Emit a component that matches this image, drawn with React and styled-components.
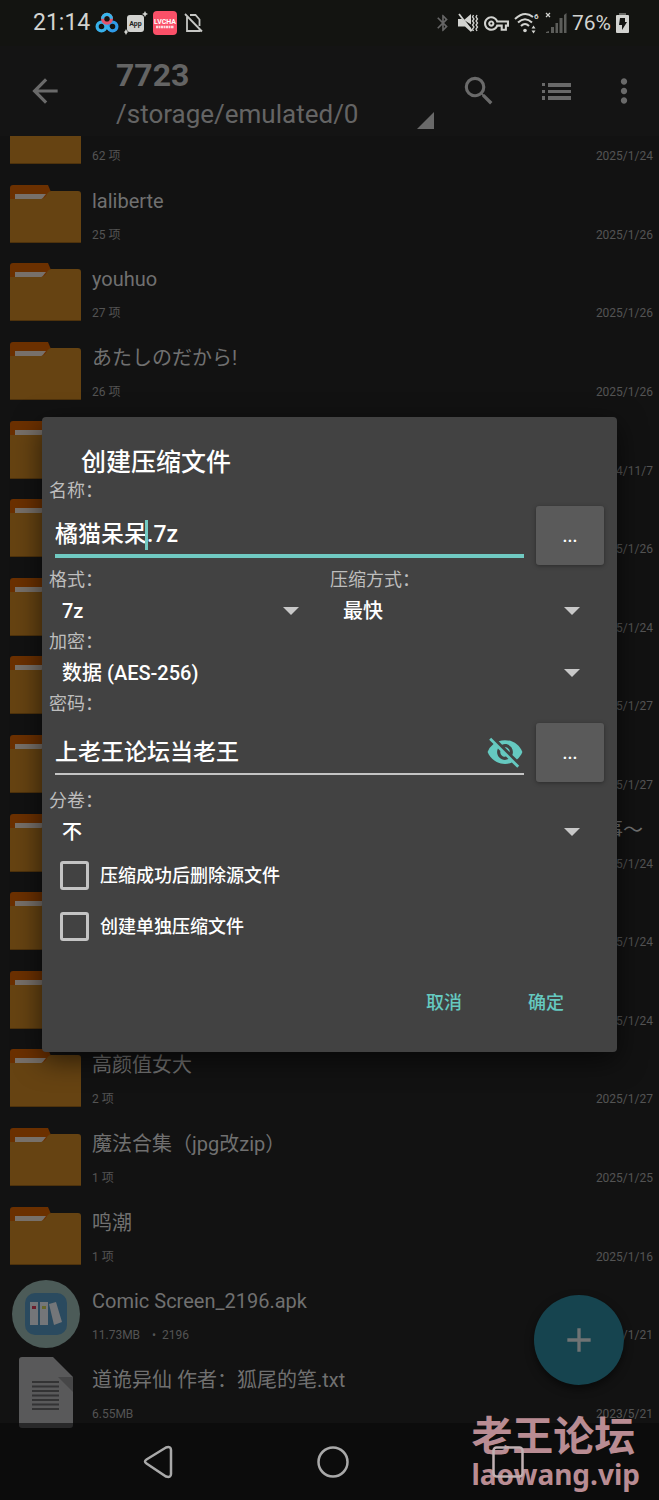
import React, { useState } from 'react';
import styled, { createGlobalStyle } from 'styled-components';
import {
  MdAdd,
  MdArrowBack,
  MdBluetooth,
  MdMoreVert,
  MdOutlineVpnKey,
  MdSearch,
  MdVisibilityOff,
} from 'react-icons/md';

const GlobalStyle = createGlobalStyle`
  * {
    box-sizing: border-box;
  }

  body {
    margin: 0;
    background: #121212;
  }

  body, button, input, select {
    font-family: Roboto, "Noto Sans CJK SC", sans-serif;
  }

  svg {
    display: block;
    flex: none;
  }
`;

// Screen

const Screen = styled.div`
  position: relative;
  display: flex;
  flex-direction: column;
  height: 100vh;
  overflow: hidden;
  background: #121212;
  color: #6e6e6e;
`;

const StatusBar = styled.header`
  display: flex;
  flex: none;
  align-items: center;
  justify-content: space-between;
  height: 46px;
  padding: 0 30px 0 33px;
  background: #131411;
  color: #d2d3d0;
`;

const StatusGroup = styled.div`
  display: flex;
  align-items: center;
  gap: 5px;
`;

const StatusText = styled.span`
  font-size: ${({ $size }) => $size}px;
  line-height: 28px;
`;

const Toolbar = styled.div`
  display: flex;
  flex: none;
  align-items: center;
  height: 90px;
  padding: 0 18px 0 28px;
  background: #141414;
`;

const IconButton = styled.button`
  display: flex;
  align-items: center;
  justify-content: center;
  width: ${({ $width }) => $width || 34}px;
  height: 48px;
  padding: 0;
  border: 0;
  background: none;
  color: ${({ $color }) => $color || '#6a6a6a'};
`;

const PathBox = styled.div`
  display: flex;
  flex: 1;
  align-items: flex-end;
  justify-content: space-between;
  max-width: 318px;
  margin-left: 54px;
  padding-top: 6px;
`;

const PathArrow = styled.svg`
  margin-bottom: 4px;
`;

const FolderTitle = styled.h1`
  margin: 0;
  font-size: 32px;
  font-weight: 700;
  line-height: 40px;
  color: #646464;
`;

const FolderPath = styled.div`
  font-size: 26px;
  line-height: 38px;
  color: #646464;
`;

const ToolbarActions = styled.div`
  display: flex;
  flex: none;
  align-items: center;
  gap: 28px;
  margin-left: auto;
`;

// File list

const ListViewport = styled.main`
  flex: 1;
  min-height: 0;
  overflow: hidden;
`;

const FileList = styled.ul`
  display: grid;
  grid-auto-rows: 1fr;
  height: calc(100% + 41px);
  margin: -40px 0 0;
  padding: 0;
  list-style: none;
`;

const FileRow = styled.li`
  display: flex;
  align-items: center;
  gap: 11px;
  min-height: 0;
  padding: 0 6px 0 10px;
`;

const FileIcon = styled.div`
  display: flex;
  flex: none;
  justify-content: center;
  width: 71px;
`;

const FileInfo = styled.div`
  display: flex;
  flex: 1;
  flex-direction: column;
  gap: 13px;
  min-width: 0;
  padding-top: 3px;
`;

const FileName = styled.div`
  height: 26px;
  padding-right: ${({ $end }) => ($end ? 10 : 0)}px;
  font-size: 20px;
  line-height: 26px;
  text-align: ${({ $end }) => ($end ? 'right' : 'left')};
  white-space: nowrap;
  color: #707070;
`;

const FileMeta = styled.div`
  display: flex;
  justify-content: space-between;
  height: 16px;
  font-size: 12px;
  line-height: 16px;
  white-space: pre;
  color: #545454;
`;

const Fab = styled.button`
  position: absolute;
  right: 35px;
  bottom: 115px;
  display: flex;
  align-items: center;
  justify-content: center;
  width: 90px;
  height: 90px;
  padding: 0;
  border: 0;
  border-radius: 50%;
  background: #16444f;
  box-shadow: 0 4px 8px rgba(0, 0, 0, 0.5);
  color: #6f7374;
`;

const NavBar = styled.nav`
  position: relative;
  display: flex;
  flex: none;
  align-items: center;
  justify-content: space-around;
  height: 77px;
  margin-top: -8px;
  padding: 0 64px 0 70px;
  background: rgba(9, 9, 9, 0.6);
`;

const NavButton = styled(IconButton)`
  position: relative;
  z-index: 2;
`;

const Watermark = styled.div`
  position: absolute;
  right: 19px;
  bottom: 8px;
  z-index: 1;
  font-family: "Noto Sans", "Noto Sans CJK SC", sans-serif;
  font-weight: 700;
  color: #b98c93;
`;

const WatermarkName = styled.div`
  font-size: 41px;
  line-height: 42px;
`;

const WatermarkSite = styled.div`
  font-size: 28px;
  line-height: 36px;
`;

// Dialog

const Overlay = styled.div`
  position: absolute;
  inset: 0;
  z-index: 3;
  display: flex;
  align-items: center;
  padding: 45px 42px 76px;
`;

const Dialog = styled.form`
  display: flex;
  flex: 1;
  flex-direction: column;
  padding: 31px 6px 24px 7px;
  border-radius: 4px;
  background: #424242;
  box-shadow: 0 8px 28px rgba(0, 0, 0, 0.6);
  color: #fff;
`;

const DialogTitle = styled.h2`
  margin: 0 0 0 32px;
  font-size: 25px;
  font-weight: 500;
  line-height: 30px;
`;

const Label = styled.label`
  display: block;
  font-size: 18px;
  line-height: 26px;
  color: #bdbdbd;
`;

const FieldRow = styled.div`
  display: flex;
  align-items: center;
  gap: 12px;
  padding: ${({ $space }) => $space}px 7px ${({ $space }) => $space}px 6px;
`;

const Field = styled.div`
  position: relative;
  display: flex;
  flex: 1;
  align-items: center;
  height: 44px;
  border-bottom: ${({ $active }) => ($active ? '4px solid #70cac2' : '2px solid #c4c4c4')};
`;

const TextInput = styled.input`
  flex: 1;
  min-width: 0;
  height: 40px;
  padding: 0 0 4px;
  border: 0;
  outline: 0;
  background: none;
  font-size: 23px;
  font-weight: 500;
  color: #fff;
`;

const Caret = styled.span`
  position: absolute;
  top: 6px;
  left: 90px;
  width: 3px;
  height: 30px;
  background: #70cac2;
`;

const BrowseButton = styled.button`
  width: 68px;
  height: 59px;
  padding: 0;
  border: 0;
  border-radius: 3px;
  background: #5a5a5a;
  box-shadow: 0 1px 4px rgba(0, 0, 0, 0.35);
  font-size: 18px;
  font-weight: 500;
  color: #fff;
`;

const Columns = styled.div`
  display: grid;
  grid-template-columns: 1fr 1fr;
`;

const SelectBox = styled.div`
  display: flex;
  align-items: center;
  height: 36px;
  padding-right: 31px;
`;

const Select = styled.select`
  flex: 1;
  height: 36px;
  margin-right: -16px;
  padding: 0 16px 0 13px;
  border: 0;
  outline: 0;
  appearance: none;
  background: none;
  font-size: 20px;
  font-weight: 500;
  color: #fff;
`;

const CheckRow = styled.label`
  display: flex;
  align-items: center;
  gap: 11px;
  height: 51px;
  padding-left: 11px;
  font-size: 18px;
  font-weight: 500;
`;

const CheckText = styled.span`
  padding-bottom: 3px;
`;

const CheckBox = styled.input`
  flex: none;
  width: 29px;
  height: 29px;
  margin: 0;
  border: 3px solid #c4c4c4;
  border-radius: 3px;
  appearance: none;

  &:checked {
    background: #70cac2;
  }
`;

const Actions = styled.div`
  display: flex;
  justify-content: flex-end;
  gap: 22px;
  padding: 24px 25px 0 0;
`;

const TextButton = styled.button`
  width: 80px;
  height: 52px;
  padding: 0 0 2px;
  border: 0;
  background: none;
  font-size: 18px;
  font-weight: 500;
  color: #65c9c0;
`;

const files = [
  { name: '', meta: '62 项', date: '2025/1/24' },
  { name: 'laliberte', meta: '25 项', date: '2025/1/26' },
  { name: 'youhuo', meta: '27 项', date: '2025/1/26' },
  { name: 'あたしのだから!', meta: '26 项', date: '2025/1/26' },
  { name: '', meta: '', date: '2024/11/7' },
  { name: '', meta: '', date: '2025/1/26' },
  { name: '', meta: '', date: '2025/1/24' },
  { name: '', meta: '', date: '2025/1/27' },
  { name: '', meta: '', date: '2025/1/27' },
  { name: '事～', meta: '', date: '2025/1/24', end: true },
  { name: '', meta: '', date: '2025/1/24' },
  { name: '', meta: '', date: '2025/1/24' },
  { name: '高颜值女大', meta: '2 项', date: '2025/1/27' },
  { name: '魔法合集（jpg改zip）', meta: '1 项', date: '2025/1/25' },
  { name: '鸣潮', meta: '1 项', date: '2025/1/16' },
  { name: 'Comic Screen_2196.apk', meta: '11.73MB    •  2196', date: '2025/1/21', type: 'apk' },
  { name: '道诡异仙 作者：狐尾的笔.txt', meta: '6.55MB', date: '2023/5/21', type: 'txt' },
];

function FolderIcon() {
  return (
    <svg width="71" height="58" viewBox="0 0 71 58">
      <path d="M0 3q0-3 3-3h35l3 7v12H0z" fill="#6b3000" />
      <path d="M5 9h31l-4 5H5z" fill="#77706a" />
      <path d="M0 14h31q3 0 5-3l1-2q2-3 4-3h27q3 0 3 3v49H0z" fill="#664312" />
      <path d="M0 57h71v1H0z" fill="#4e320c" />
    </svg>
  );
}

function ApkIcon() {
  return (
    <svg width="68" height="68" viewBox="0 0 68 68">
      <circle cx="34" cy="34" r="34" fill="#4c5b58" />
      <rect x="13" y="13" width="42" height="42" rx="10" fill="#2a4a5f" />
      <path d="M18 22h8v23h-8zM28 22h8v23h-8zM37 24l7-2 6 20-8 3z" fill="#747679" />
      <path d="M20 26h4v3h-4z" fill="#6b1d2b" />
      <path d="M30 26h4v3h-4z" fill="#67672a" />
    </svg>
  );
}

function TextFileIcon() {
  return (
    <svg width="54" height="71" viewBox="0 0 54 71">
      <path d="M3 0h31l20 20v48q0 3-3 3H3q-3 0-3-3V3q0-3 3-3z" fill="#59595a" />
      <path d="M39 20h15v15z" fill="#464647" />
      <path
        d="M13 25h27M13 29.500h27M13 34h27M13 38.500h27M13 43h27M13 47.500h27M13 52h27"
        stroke="#333334"
        strokeWidth="2"
      />
    </svg>
  );
}

const icons = { apk: ApkIcon, txt: TextFileIcon };

function DropArrow() {
  return (
    <svg width="16" height="8" viewBox="0 0 16 8">
      <path d="M0 0h16L8 8z" fill="#c8c8c8" />
    </svg>
  );
}

function Dropdown({ id, label, options }) {
  return (
    <div>
      <Label htmlFor={id}>{label}</Label>
      <SelectBox>
        <Select id={id}>
          {options.map((option) => (
            <option key={option}>{option}</option>
          ))}
        </Select>
        <DropArrow />
      </SelectBox>
    </div>
  );
}

function AppBadges() {
  return (
    <>
      <svg width="24" height="22" viewBox="0 0 24 22" fill="none" strokeWidth="3.200">
        <circle cx="6.500" cy="14.500" r="4.400" stroke="#38b1ea" />
        <circle cx="17.500" cy="14.500" r="4.400" stroke="#2f9be8" />
        <path d="M9.500 11.500l5 6" stroke="#38b1ea" />
        <circle cx="12" cy="6.800" r="4.400" stroke="#e2546c" />
        <path d="M7.600 6.800a4.400 4.400 0 0 1 8.800 0" stroke="#35b5ee" />
      </svg>
      <svg width="24" height="24" viewBox="0 0 24 24">
        <rect x="3" y="4" width="17" height="17" rx="3" fill="#d2d3d0" />
        <path d="M21 0l1 2 2 1-2 1-1 2-1-2-2-1 2-1zM2 18l1 2 1 1-1 1-1 2-1-2-1-1 1-1z" fill="#d2d3d0" />
        <text x="11.500" y="15" fontSize="7" fontWeight="700" textAnchor="middle" fill="#22231f">App</text>
      </svg>
      <svg width="24" height="24" viewBox="0 0 24 24">
        <rect width="24" height="24" rx="4" fill="#fb5068" />
        <text x="12" y="13" fontSize="7" fontWeight="700" textAnchor="middle" fill="#fff">LVCHA</text>
        <path d="M3 16h18" stroke="#fff" strokeWidth="2.500" strokeDasharray="2 .5" opacity=".8" />
      </svg>
      <svg width="22" height="20" viewBox="-2 0 22 20" fill="none" stroke="#c6c7c4" strokeWidth="1.800">
        <path d="M3 4v14h12.500v-2M6 2h5.500l4 4.500V13M1 1l17 17.500" />
      </svg>
    </>
  );
}

function SystemIcons() {
  return (
    <>
      <MdBluetooth size={20} color="#666" />
      <svg width="21" height="20" viewBox="0 0 21 20">
        <path d="M6 7l7-6v10.500zM0 6h4l9 9v4l-6-5.500H0z" fill="#d2d3d0" />
        <path d="M1 1l13 17" stroke="#d2d3d0" strokeWidth="1.800" />
        <path
          d="M15.500 2l-1 2 1.500 2-1.500 2 1.500 2-1.500 2 1.500 2-1.500 2 1 2M19 2l-1 2 1.500 2L18 8l1.500 2-1.500 2 1.500 2-1.500 2 1 2"
          fill="none"
          stroke="#d2d3d0"
          strokeWidth="1.300"
        />
      </svg>
      <MdOutlineVpnKey size={25} />
      <svg width="26" height="22" viewBox="0 0 26 22" fill="none" stroke="#d2d3d0" strokeWidth="2">
        <path d="M1 7q9.500-9 18-2M4 10.500q7-6.500 14 0M7 14q4-4 8 0" />
        <circle cx="11" cy="18.500" r="1.800" fill="#d2d3d0" stroke="none" />
        <path d="M17.500 16.500h4l-2-3zM17.500 18.500h4l-2 3z" fill="#d2d3d0" stroke="none" />
        <text x="20" y="7" fontSize="8" fontWeight="700" fill="#d2d3d0" stroke="none">6</text>
      </svg>
      <svg width="22" height="22" viewBox="0 0 22 22">
        <path d="M1 1l4 4M5 1L1 5" stroke="#d2d3d0" strokeWidth="1.200" />
        <path d="M1 21v-1l3-1v2zM6 15h3v6H6zM10.500 11h2.500v10h-2.500zM14.500 6h3v15h-3zM19 3l2.500-2v20H19z" fill="#5c5d5a" />
      </svg>
    </>
  );
}

export default function App() {
  const [name, setName] = useState('橘猫呆呆.7z');
  const [password, setPassword] = useState('上老王论坛当老王');

  return (
    <>
      <GlobalStyle />
      <Screen>
        <StatusBar>
          <StatusGroup>
            <StatusText $size={23}>21:14</StatusText>
            <AppBadges />
          </StatusGroup>
          <StatusGroup>
            <SystemIcons />
            <StatusText $size={21}>76%</StatusText>
            <svg width="13" height="20" viewBox="0 0 13 20">
              <path d="M3 0h7v3H3z" fill="#666763" />
              <path d="M1 2h11q1 0 1 1v16q0 1-1 1H1q-1 0-1-1V3q0-1 1-1z" fill="#d2d3d0" />
              <path d="M4 5h5v4h2l-5 8v-5H3z" fill="#131411" />
            </svg>
          </StatusGroup>
        </StatusBar>

        <Toolbar>
          <IconButton type="button" aria-label="返回">
            <MdArrowBack size={38} />
          </IconButton>
          <PathBox>
            <div>
              <FolderTitle>7723</FolderTitle>
              <FolderPath>/storage/emulated/0</FolderPath>
            </div>
            <PathArrow width="17" height="17" viewBox="0 0 17 17">
              <path d="M17 0v17H0z" fill="#696969" />
            </PathArrow>
          </PathBox>
          <ToolbarActions>
            <IconButton type="button" aria-label="搜索" $width={52}>
              <MdSearch size={38} />
            </IconButton>
            <IconButton type="button" aria-label="视图" $width={46}>
              <svg width="29" height="17" viewBox="0 0 29 17">
                <path
                  d="M0 0h3v3H0zM6 0h23v4H6zM0 7h3v3H0zM6 7h23v3H6zM0 13h3v4H0zM6 13h23v4H6z"
                  fill="#696969"
                />
              </svg>
            </IconButton>
            <IconButton type="button" aria-label="更多">
              <MdMoreVert size={38} />
            </IconButton>
          </ToolbarActions>
        </Toolbar>

        <ListViewport>
          <FileList>
            {files.map((file, index) => {
              const Icon = icons[file.type] || FolderIcon;
              return (
                <FileRow key={index}>
                  <FileIcon>
                    <Icon />
                  </FileIcon>
                  <FileInfo>
                    <FileName $end={file.end}>{file.name}</FileName>
                    <FileMeta>
                      <span>{file.meta}</span>
                      <time>{file.date}</time>
                    </FileMeta>
                  </FileInfo>
                </FileRow>
              );
            })}
          </FileList>
        </ListViewport>

        <NavBar>
          <NavButton type="button" aria-label="后退" $color="#a9a9a9">
            <svg width="30" height="34" viewBox="0 0 30 34" fill="none" stroke="currentColor" strokeWidth="2.500">
              <path d="M23 2.500L3.500 14.500q-3 2 0 4L23 31.500q5 1.500 5-2.500V5q0-4-5-2.500z" />
            </svg>
          </NavButton>
          <NavButton type="button" aria-label="主页" $color="#a9a9a9">
            <svg width="34" height="34" viewBox="0 0 34 34" fill="none" stroke="currentColor" strokeWidth="2.500">
              <circle cx="17" cy="17" r="14.500" />
            </svg>
          </NavButton>
          <NavButton type="button" aria-label="最近任务" $color="#c0b0b2">
            <svg width="32" height="32" viewBox="0 0 32 32" fill="none" stroke="currentColor" strokeWidth="2.500">
              <rect x="1.500" y="1.500" width="29" height="29" rx="3" />
            </svg>
          </NavButton>
        </NavBar>

        <Fab type="button" aria-label="新建">
          <MdAdd size={40} />
        </Fab>

        <Watermark>
          <WatermarkName>老王论坛</WatermarkName>
          <WatermarkSite>laowang.vip</WatermarkSite>
        </Watermark>

        <Overlay>
          <Dialog role="dialog" aria-labelledby="dialog-title" onSubmit={(e) => e.preventDefault()}>
            <DialogTitle id="dialog-title">创建压缩文件</DialogTitle>

            <Label htmlFor="name">名称：</Label>
            <FieldRow $space={2}>
              <Field $active>
                <TextInput id="name" value={name} onChange={(e) => setName(e.target.value)} />
                <Caret />
              </Field>
              <BrowseButton type="button">...</BrowseButton>
            </FieldRow>

            <Columns>
              <Dropdown id="format" label="格式：" options={['7z', 'zip']} />
              <Dropdown id="level" label="压缩方式：" options={['最快', '标准']} />
            </Columns>
            <Dropdown id="encryption" label="加密：" options={['数据 (AES-256)']} />

            <Label htmlFor="password">密码：</Label>
            <FieldRow $space={6}>
              <Field>
                <TextInput id="password" value={password} onChange={(e) => setPassword(e.target.value)} />
                <IconButton type="button" aria-label="隐藏密码" $width={38} $color="#65c9c0">
                  <MdVisibilityOff size={38} />
                </IconButton>
              </Field>
              <BrowseButton type="button">...</BrowseButton>
            </FieldRow>

            <Dropdown id="volume" label="分卷：" options={['不']} />

            <CheckRow>
              <CheckBox type="checkbox" />
              <CheckText>压缩成功后删除源文件</CheckText>
            </CheckRow>
            <CheckRow>
              <CheckBox type="checkbox" />
              <CheckText>创建单独压缩文件</CheckText>
            </CheckRow>

            <Actions>
              <TextButton type="button">取消</TextButton>
              <TextButton type="submit">确定</TextButton>
            </Actions>
          </Dialog>
        </Overlay>
      </Screen>
    </>
  );
}
